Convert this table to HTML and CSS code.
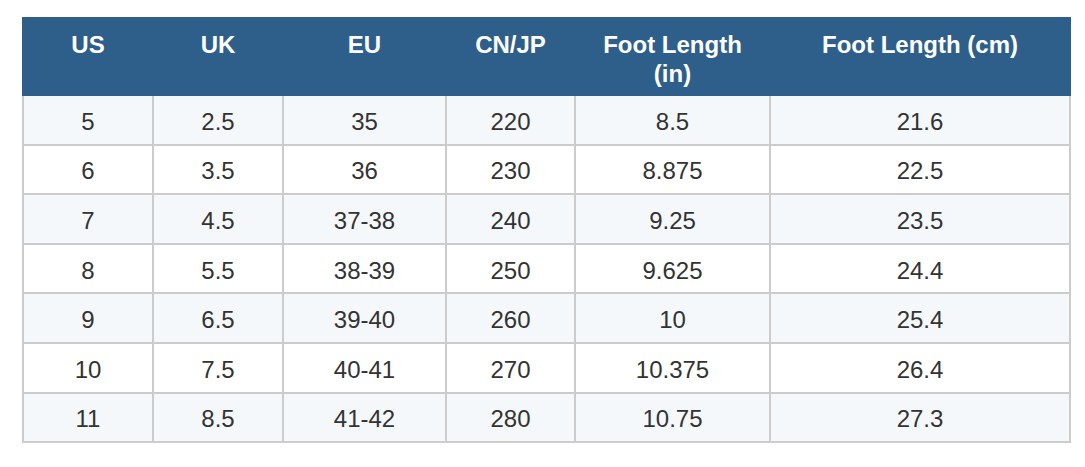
FILE: index.html
```html
<!DOCTYPE html>
<html lang="en">
<head>
<meta charset="utf-8">
<title>Size Chart</title>
<link rel="stylesheet" href="styles.css">
</head>
<body>
<div class="wrap">
<table class="size-chart">
  <colgroup>
    <col class="c1"><col class="c2"><col class="c3"><col class="c4"><col class="c5"><col class="c6">
  </colgroup>
  <thead>
    <tr>
      <th>US</th><th>UK</th><th>EU</th><th>CN/JP</th><th>Foot Length<br>(in)</th><th>Foot Length (cm)</th>
    </tr>
  </thead>
  <tbody>
    <tr><td>5</td><td>2.5</td><td>35</td><td>220</td><td>8.5</td><td>21.6</td></tr>
    <tr><td>6</td><td>3.5</td><td>36</td><td>230</td><td>8.875</td><td>22.5</td></tr>
    <tr><td>7</td><td>4.5</td><td>37-38</td><td>240</td><td>9.25</td><td>23.5</td></tr>
    <tr><td>8</td><td>5.5</td><td>38-39</td><td>250</td><td>9.625</td><td>24.4</td></tr>
    <tr><td>9</td><td>6.5</td><td>39-40</td><td>260</td><td>10</td><td>25.4</td></tr>
    <tr><td>10</td><td>7.5</td><td>40-41</td><td>270</td><td>10.375</td><td>26.4</td></tr>
    <tr><td>11</td><td>8.5</td><td>41-42</td><td>280</td><td>10.75</td><td>27.3</td></tr>
  </tbody>
</table>
</div>
</body>
</html>
```
FILE: styles.css
```css
html, body {
  margin: 0;
  padding: 0;
  background: #ffffff;
}
.wrap {
  padding: 17px 16px 0 22px;
}
.size-chart {
  width: 1047px;
  border-collapse: collapse;
  table-layout: fixed;
  font-family: "Liberation Sans", Arial, sans-serif;
  font-size: 24px;
  color: #333333;
}
.c1 { width: 130px; }
.c2 { width: 130px; }
.c3 { width: 163px; }
.c4 { width: 129px; }
.c5 { width: 195px; }
.c6 { width: 300px; }
.size-chart th {
  background: #2d5f8a;
  color: #ffffff;
  font-weight: bold;
  text-align: center;
  vertical-align: top;
  line-height: 29px;
  height: 77px;
  box-sizing: border-box;
  padding: 11px 8px 6px;
  border: 2px solid #2d5f8a;
}
.size-chart td {
  text-align: center;
  vertical-align: middle;
  height: 49.6px;
  box-sizing: border-box;
  padding: 3px 8px 0;
  border: 2px solid #cccccc;
  line-height: 29px;
}
.size-chart tbody tr:nth-child(odd) td {
  background: #f5f8fb;
}
.size-chart tbody tr:nth-child(even) td {
  background: #ffffff;
}
```
